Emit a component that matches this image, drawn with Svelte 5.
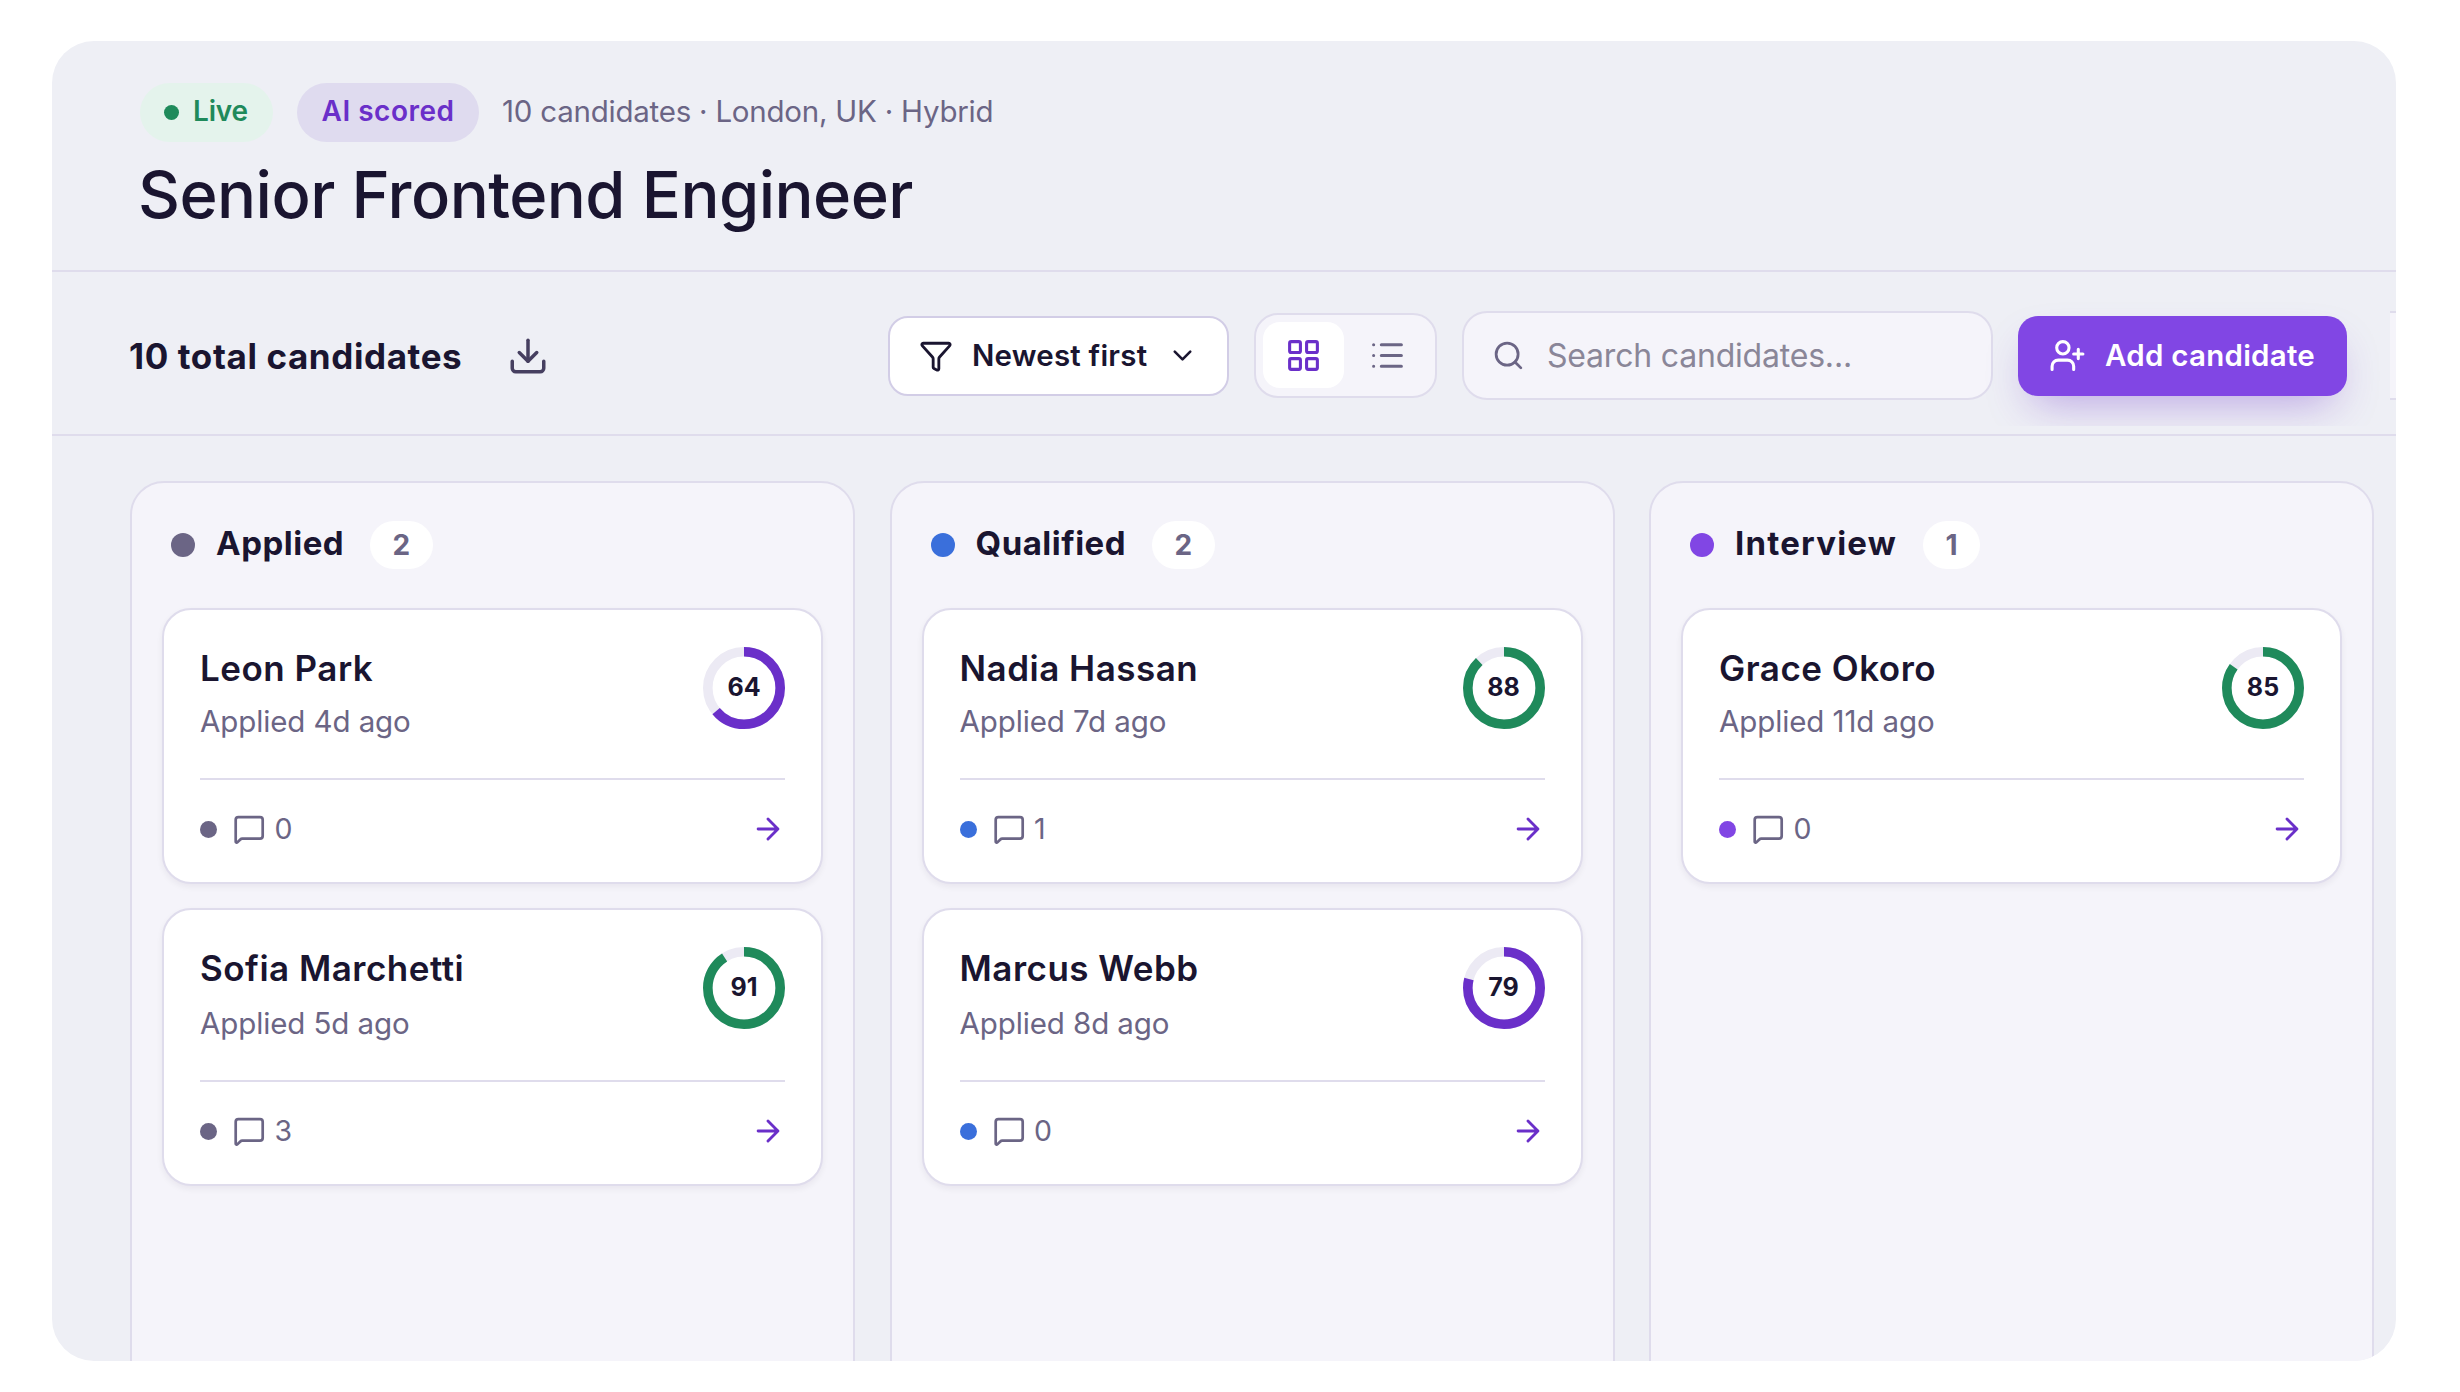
<script lang="ts">
  type Candidate = {
    name: string;
    days: number;
    score: number;
    comments: number;
  };

  type Stage = {
    id: string;
    label: string;
    candidates: Candidate[];
  };

  const stages: Stage[] = [
    {
      id: 'applied',
      label: 'Applied',
      candidates: [
        { name: 'Leon Park', days: 4, score: 64, comments: 0 },
        { name: 'Sofia Marchetti', days: 5, score: 91, comments: 3 }
      ]
    },
    {
      id: 'qualified',
      label: 'Qualified',
      candidates: [
        { name: 'Nadia Hassan', days: 7, score: 88, comments: 1 },
        { name: 'Marcus Webb', days: 8, score: 79, comments: 0 }
      ]
    },
    {
      id: 'interview',
      label: 'Interview',
      candidates: [{ name: 'Grace Okoro', days: 11, score: 85, comments: 0 }]
    }
  ];

  let view = $state<'board' | 'list'>('board');
  let query = $state('');

  function visible(candidates: Candidate[]): Candidate[] {
    const q = query.trim().toLowerCase();
    return q ? candidates.filter((c) => c.name.toLowerCase().includes(q)) : candidates;
  }
</script>

<main class="panel">
  <header class="job-header">
    <div class="meta-row">
      <span class="pill live"><i class="live-dot"></i>Live</span>
      <span class="pill ai">AI scored</span>
      <span class="meta">10 candidates · London, UK · Hybrid</span>
    </div>
    <h1>Senior Frontend Engineer</h1>
  </header>

  <div class="toolbar">
    <div class="toolbar-inner">
      <h2>10 total candidates</h2>
      <button class="icon-btn" aria-label="Download">
        <svg width="42" height="42" viewBox="0 0 24 24">
          <path d="M12 15V3" />
          <path d="M21 15v4a2 2 0 0 1-2 2H5a2 2 0 0 1-2-2v-4" />
          <path d="m7 10 5 5 5-5" />
        </svg>
      </button>

      <div class="controls">
        <button class="sort">
          <svg width="34" height="34" viewBox="0 0 24 24">
            <path d="M10 20a1 1 0 0 0 .553.895l2 1A1 1 0 0 0 14 21v-7a2 2 0 0 1 .517-1.341L21.74 4.67A1 1 0 0 0 21 3H3a1 1 0 0 0-.742 1.67l7.225 7.989A2 2 0 0 1 10 14z" />
          </svg>
          <span>Newest first</span>
          <svg class="chevron" width="31" height="31" viewBox="0 0 24 24">
            <path d="m6 9 6 6 6-6" />
          </svg>
        </button>

        <div class="toggle">
          <button class:active={view === 'board'} aria-label="Board" onclick={() => (view = 'board')}>
            <svg width="37" height="37" viewBox="0 0 24 24">
              <rect width="7" height="7" x="3" y="3" rx="1" />
              <rect width="7" height="7" x="14" y="3" rx="1" />
              <rect width="7" height="7" x="14" y="14" rx="1" />
              <rect width="7" height="7" x="3" y="14" rx="1" />
            </svg>
          </button>
          <button class:active={view === 'list'} aria-label="List" onclick={() => (view = 'list')}>
            <svg width="37" height="37" viewBox="0 0 24 24">
              <path d="M3 5h.01M3 12h.01M3 19h.01M8 5h13M8 12h13M8 19h13" />
            </svg>
          </button>
        </div>

        <label class="search">
          <svg width="33" height="33" viewBox="0 0 24 24">
            <circle cx="11" cy="11" r="8" />
            <path d="m21 21-4.34-4.34" />
          </svg>
          <input type="text" placeholder="Search candidates..." bind:value={query} />
        </label>

        <button class="add">
          <svg width="37" height="37" viewBox="0 0 24 24">
            <path d="M16 21v-2a4 4 0 0 0-4-4H6a4 4 0 0 0-4 4v2" />
            <circle cx="9" cy="7" r="4" />
            <path d="M19 8v6M22 11h-6" />
          </svg>
          <span>Add candidate</span>
        </button>

        <div class="overflow-edge"></div>
      </div>
    </div>
  </div>

  <div class="board">
    {#each stages as stage (stage.id)}
      <section class="column {stage.id}">
        <div class="column-header">
          <i class="dot"></i>
          <h3>{stage.label}</h3>
          <span class="count">{stage.candidates.length}</span>
        </div>

        {#each visible(stage.candidates) as candidate (candidate.name)}
          <article class="card">
            <div class="card-top">
              <div>
                <h4>{candidate.name}</h4>
                <p class="date">Applied {candidate.days}d ago</p>
              </div>
              <div class="ring" class:high={candidate.score >= 80}>
                <svg viewBox="0 0 82 82">
                  <circle class="track" cx="41" cy="41" r="36.2" />
                  <circle
                    class="value"
                    cx="41"
                    cy="41"
                    r="36.2"
                    pathLength="100"
                    stroke-dasharray="{candidate.score} 100"
                    transform="rotate(-90 41 41)"
                  />
                </svg>
                <span>{candidate.score}</span>
              </div>
            </div>
            <div class="card-footer">
              <i class="dot small"></i>
              <svg class="comment" width="32.4" height="32.4" viewBox="0 0 24 24">
                <path d="M22 17a2 2 0 0 1-2 2H6.828a2 2 0 0 0-1.414.586l-2.202 2.202A.71.71 0 0 1 2 21.286V5a2 2 0 0 1 2-2h16a2 2 0 0 1 2 2z" />
              </svg>
              <span class="comments">{candidate.comments}</span>
              <svg class="arrow" width="34" height="34" viewBox="0 0 24 24">
                <path d="M5 12h14M12 5l7 7-7 7" />
              </svg>
            </div>
          </article>
        {/each}
      </section>
    {/each}
  </div>
</main>

<style>
  :global(body) {
    background: #ffffff;
    overflow: hidden;
  }

  .panel {
    --border: #dfdcec;
    --ink: #1a1530;
    --muted: #6b6585;
    --purple: #8146e4;
    --purple-deep: #6a2fc9;
    --green: #1f8a5b;
    --surface: #f5f4fa;
    box-sizing: border-box;
    width: 2344px;
    height: 1320px;
    margin: 41px 52px 0;
    overflow: hidden;
    border-radius: 42px;
    background: #eeeff5;
    color: var(--ink);
    font-family: Inter, 'Liberation Sans', sans-serif;
  }

  .panel * {
    box-sizing: border-box;
  }

  h1,
  h2,
  h3,
  h4,
  p {
    margin: 0;
  }

  button {
    padding: 0;
    border: none;
    background: transparent;
    color: inherit;
    font: inherit;
    cursor: pointer;
  }

  svg {
    display: block;
    flex: none;
    fill: none;
    stroke: currentColor;
    stroke-width: 2;
    stroke-linecap: round;
    stroke-linejoin: round;
  }

  .job-header {
    height: 231px;
    padding: 42px 88px 0;
    border-bottom: 2px solid var(--border);
  }

  .meta-row {
    display: flex;
    align-items: center;
    height: 59px;
  }

  .pill {
    display: flex;
    align-items: center;
    height: 59px;
    border-radius: 30px;
    font-size: 28px;
    font-weight: 600;
    line-height: 1;
    padding-bottom: 4px;
    white-space: nowrap;
  }

  .live {
    width: 133px;
    padding-left: 24px;
    background: #e4f3ec;
    color: var(--green);
    letter-spacing: -0.2px;
  }

  .live-dot {
    width: 15px;
    height: 15px;
    margin: 4px 14px 0 0;
    border-radius: 50%;
    background: var(--green);
  }

  .ai {
    width: 182px;
    margin-left: 24px;
    justify-content: center;
    background: #dfdbef;
    color: var(--purple-deep);
    letter-spacing: 0.5px;
  }

  .meta {
    margin: -3px 0 0 23px;
    color: var(--muted);
    font-size: 29.5px;
    line-height: 40px;
    letter-spacing: -0.23px;
    white-space: nowrap;
  }

  h1 {
    margin: 13px 0 0 -2px;
    font-size: 65px;
    font-weight: 500;
    line-height: 80px;
    letter-spacing: -0.55px;
    white-space: nowrap;
  }

  .toolbar {
    height: 164px;
    padding-top: 13px;
    border-bottom: 2px solid var(--border);
  }

  .toolbar-inner {
    display: flex;
    align-items: center;
    height: 141px;
    padding-left: 77px;
    overflow: hidden;
  }

  h2 {
    width: 377.5px;
    font-size: 35px;
    font-weight: 700;
    line-height: 42px;
    letter-spacing: 0.6px;
    white-space: nowrap;
  }

  .icon-btn {
    color: #463f60;
  }

  .controls {
    display: flex;
    align-items: center;
    margin-left: auto;
  }

  .sort {
    display: flex;
    align-items: center;
    width: 341px;
    height: 80px;
    padding: 0 29px;
    border: 2px solid #d2cde6;
    border-radius: 20px;
    background: #ffffff;
    font-size: 29.5px;
    font-weight: 600;
    letter-spacing: 0.2px;
    white-space: nowrap;
  }

  .sort span {
    margin: -1px 0 0 19px;
  }

  .chevron {
    margin-left: auto;
  }

  .toggle {
    display: flex;
    gap: 4px;
    width: 183px;
    height: 85px;
    margin-left: 25px;
    padding: 7px;
    border: 2px solid var(--border);
    border-radius: 24px;
    background: var(--surface);
  }

  .toggle button {
    display: grid;
    place-items: center;
    width: 81px;
    height: 66px;
    border-radius: 17px;
    color: var(--muted);
  }

  .toggle button.active {
    background: #ffffff;
    color: var(--purple-deep);
  }

  .search {
    display: flex;
    align-items: center;
    gap: 22px;
    width: 531px;
    height: 89px;
    margin-left: 25px;
    padding: 0 28px;
    border: 2px solid var(--border);
    border-radius: 25px;
    background: var(--surface);
    color: var(--muted);
  }

  input {
    flex: 1;
    min-width: 0;
    padding: 0;
    border: none;
    outline: none;
    background: transparent;
    color: var(--ink);
    font: inherit;
    font-size: 32px;
    letter-spacing: -0.2px;
  }

  input::placeholder {
    color: #8a8698;
    opacity: 1;
  }

  .add {
    display: flex;
    align-items: center;
    gap: 19px;
    width: 329px;
    height: 80px;
    margin-left: 25px;
    padding-left: 31px;
    border-radius: 20px;
    background: var(--purple);
    box-shadow: 0 20px 44px -14px rgba(106, 47, 201, 0.4);
    color: #ffffff;
    font-size: 29.5px;
    font-weight: 600;
    letter-spacing: 0.25px;
    white-space: nowrap;
  }

  .add span {
    margin-top: -1px;
  }

  .overflow-edge {
    width: 6px;
    height: 89px;
    margin-left: 43px;
    border: solid var(--border);
    border-width: 2px 0;
    background: var(--surface);
  }

  .board {
    display: flex;
    gap: 34.5px;
    height: 925px;
    padding: 45px 0 0 78px;
  }

  .column {
    --stage: #6b6585;
    flex: none;
    display: flex;
    flex-direction: column;
    width: 725px;
    height: 1100px;
    padding: 38px 30px;
    border: 2px solid var(--border);
    border-radius: 34px;
    background: var(--surface);
  }

  .qualified {
    --stage: #3a6fdb;
  }

  .interview {
    --stage: #8146e4;
  }

  .column-header {
    display: flex;
    align-items: center;
    height: 48px;
    margin-bottom: 39px;
    padding-left: 9px;
  }

  .dot {
    flex: none;
    width: 24px;
    height: 24px;
    border-radius: 50%;
    background: var(--stage);
  }

  .dot.small {
    width: 17px;
    height: 17px;
  }

  h3 {
    margin: -4px 26px 0 21px;
    font-size: 33px;
    font-weight: 700;
    line-height: 42px;
    letter-spacing: 0.5px;
    white-space: nowrap;
  }

  .interview h3 {
    letter-spacing: 1.2px;
  }

  .count {
    height: 48px;
    padding: 0 22.5px;
    border-radius: 24px;
    background: #ffffff;
    color: var(--muted);
    font-size: 28px;
    font-weight: 700;
    line-height: 48px;
  }

  .card {
    flex: none;
    height: 276px;
    padding: 37px 36px 0;
    border: 2px solid var(--border);
    border-radius: 29px;
    background: #ffffff;
    box-shadow: 0 3px 6px rgba(26, 21, 48, 0.06);
  }

  .card + .card {
    height: 278px;
    margin-top: 24px;
  }

  .card-top {
    display: flex;
    justify-content: space-between;
    height: 133px;
    border-bottom: 2px solid var(--border);
  }

  .card + .card .card-top {
    height: 135px;
  }

  h4 {
    font-size: 35px;
    font-weight: 600;
    line-height: 42px;
    letter-spacing: 0.5px;
    white-space: nowrap;
  }

  .date {
    margin-top: 11px;
    color: var(--muted);
    font-size: 29.5px;
    line-height: 42px;
    letter-spacing: -0.1px;
    white-space: nowrap;
  }

  .card + .card .date {
    margin-top: 13px;
  }

  .ring {
    display: grid;
    place-items: center;
    width: 82px;
    height: 82px;
    color: var(--purple-deep);
  }

  .ring.high {
    color: var(--green);
  }

  .ring svg,
  .ring span {
    grid-area: 1 / 1;
  }

  .ring svg {
    width: 82px;
    height: 82px;
    stroke-width: 9.6;
    stroke-linecap: butt;
  }

  .track {
    stroke: #eceaf4;
  }

  .ring span {
    margin-top: -3px;
    color: var(--ink);
    font-size: 25px;
    font-weight: 700;
    line-height: 30px;
  }

  .card-footer {
    display: flex;
    align-items: center;
    height: 98px;
    color: var(--muted);
  }

  .comment {
    margin-left: 16px;
  }

  .comments {
    margin: -1px 0 0 9px;
    font-size: 28.5px;
    line-height: 34px;
  }

  .arrow {
    margin: -1px 0 0 auto;
    color: var(--purple-deep);
  }
</style>
